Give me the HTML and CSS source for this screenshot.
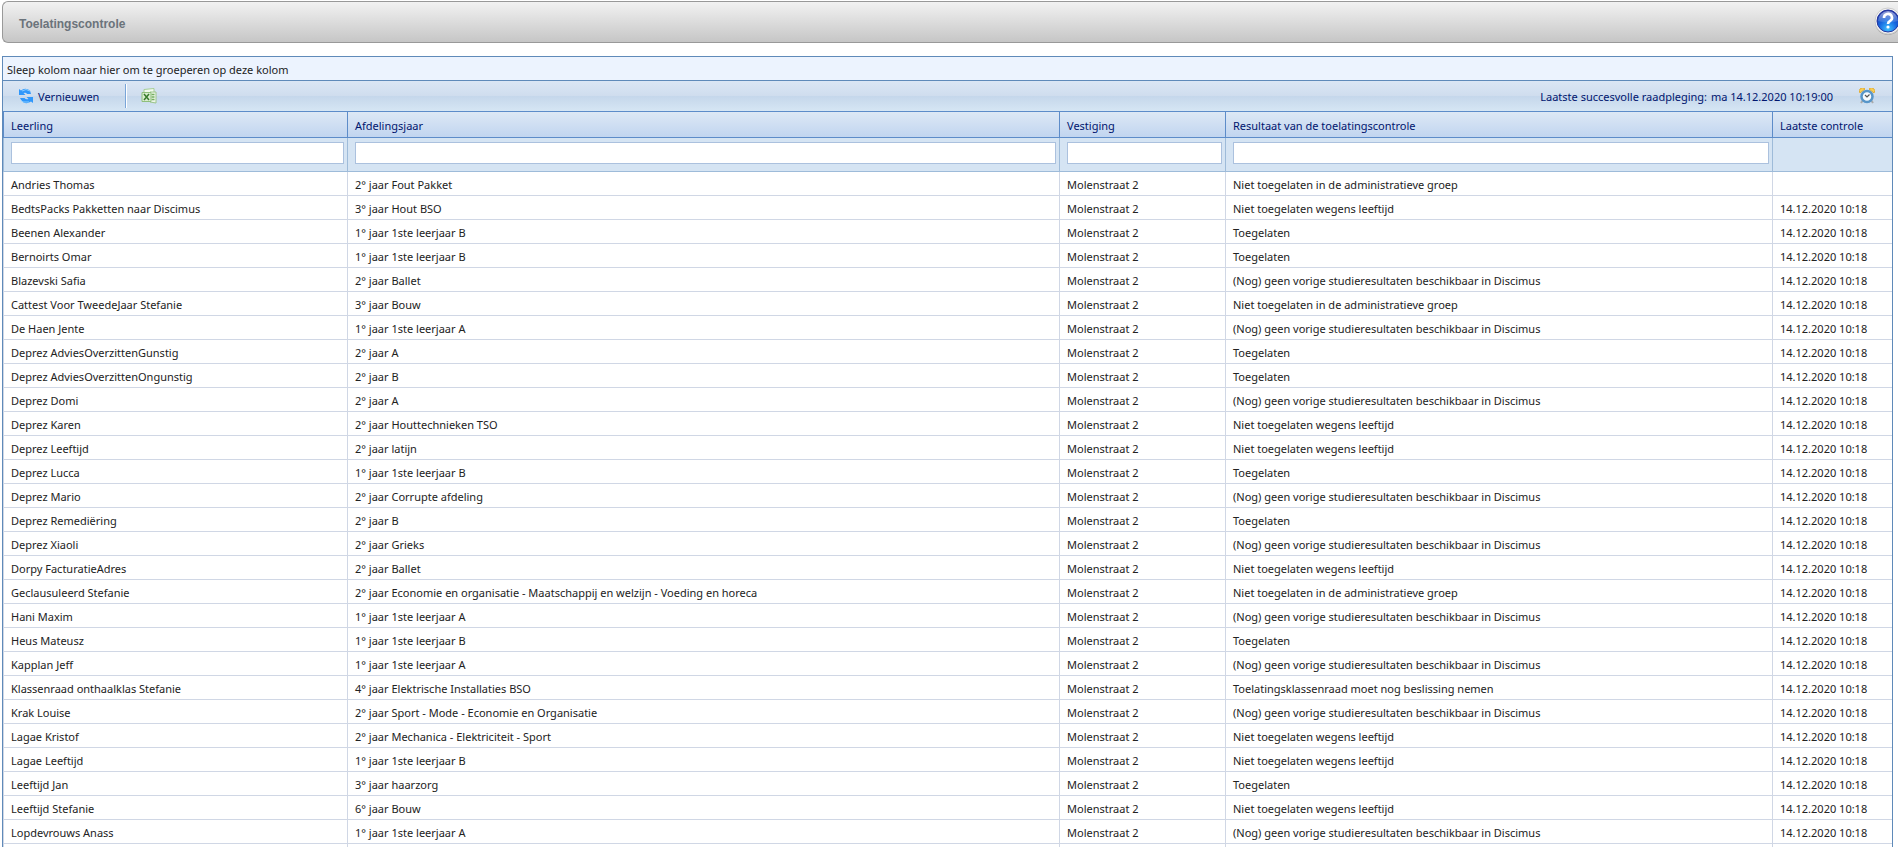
FILE: index.html
```html
<!DOCTYPE html>
<html lang="nl">
<head>
<meta charset="UTF-8" />
<title>Toelatingscontrole</title>
<link rel="stylesheet" href="styles.css">
</head>
<body>

<header class="page-header">
    <h1>Toelatingscontrole</h1>
    <button type="button" class="help-btn" aria-label="Help">
        <svg width="30" height="30" viewBox="0 0 30 30">
            <defs>
                <radialGradient id="helpFill" cx="50%" cy="85%" r="80%">
                    <stop offset="0" stop-color="#3fc0ff"/>
                    <stop offset="0.5" stop-color="#1668e0"/>
                    <stop offset="1" stop-color="#1b2fa8"/>
                </radialGradient>
                <linearGradient id="helpShine" x1="0" y1="0" x2="0" y2="1">
                    <stop offset="0" stop-color="#fff" stop-opacity="0.55"/>
                    <stop offset="1" stop-color="#fff" stop-opacity="0.1"/>
                </linearGradient>
            </defs>
            <circle cx="14" cy="15" r="13" fill="#a8a8a8"/>
            <circle cx="14" cy="14" r="13" fill="#f4f4f4" stroke="#ccc"/>
            <circle cx="14" cy="14" r="11" fill="url(#helpFill)" stroke="#24359c"/>
            <path d="M4 14a10 10 0 0 1 20 0q-10 3-20 0z" fill="url(#helpShine)"/>
            <path d="M10 11a4 3.800 0 1 1 6 3q-2 1-2 3" fill="none" stroke="#fff" stroke-width="2.600"/>
            <circle cx="14" cy="20" r="1.600" fill="#fff"/>
        </svg>
    </button>
</header>

<main class="grid">
    <div class="group-panel">Sleep kolom naar hier om te groeperen op deze kolom</div>

    <div class="toolbar">
        <button type="button" class="tool-btn">
            <svg width="16" height="16" viewBox="0 0 16 16">
                <path d="M1 7V1l2 1.500q4-3.500 9 0l1 3.500H9Q8 4 5.500 5l2 2z" fill="#2f97fb"/>
                <path d="M15 9v6l-2-1.500q-5 3.500-9 0L2 10h4.500Q8 12 10.500 11l-2-2z" fill="#2f97fb"/>
                <path d="M4 3q4-3 8 0M3 12l2 2h6" fill="none" stroke="#8accff"/>
            </svg>
            Vernieuwen
        </button>
        <span class="separator"></span>
        <button type="button" class="tool-btn" aria-label="Exporteren naar Excel">
            <svg width="16" height="16" viewBox="0 0 16 16">
                <path d="M3 1.500 13 .500v12L3 12z" fill="#f3faef" stroke="#a6ce96"/>
                <path d="M9 4h6v11l-6-1z" fill="#eef7ea" stroke="#9bc48a"/>
                <path d="M10.500 6.500h3M10.500 9h3M10.500 11.500h3" stroke="#74ad60" stroke-width="1.500"/>
                <path d="M1 4.500h9v9H1z" fill="#d9edcf" stroke="#8fbf7c"/>
                <path d="m3 6 5 6M8 6l-5 6" stroke="#377a2c" stroke-width="1.500"/>
            </svg>
        </button>
        <span class="status">Laatste succesvolle raadpleging: <time>ma 14.12.2020 10:19:00</time></span>
        <button type="button" class="tool-btn clock-btn" aria-label="Planning">
            <svg width="16" height="16" viewBox="0 0 16 16">
                <path d="m4 12-2 3M12 12l2 3" stroke="#aaa" stroke-width="2"/>
                <path d="M1 5a3 3 0 0 1 5-4zM15 5a3 3 0 0 0-5-4z" fill="#f8cf58" stroke="#dfab35"/>
                <circle cx="8" cy="8.500" r="5.500" fill="#f8fbfd" stroke="#5796c9" stroke-width="2.500"/>
                <path d="m6 7 2 2 2.500-2.500" fill="none" stroke="#555" stroke-width="1.200"/>
            </svg>
        </button>
    </div>

    <table>
        <colgroup>
            <col class="col-leerling">
            <col>
            <col class="col-vestiging">
            <col class="col-resultaat">
            <col class="col-controle">
        </colgroup>
        <thead>
            <tr>
                <th scope="col">Leerling</th>
                <th scope="col">Afdelingsjaar</th>
                <th scope="col">Vestiging</th>
                <th scope="col">Resultaat van de toelatingscontrole</th>
                <th scope="col">Laatste controle</th>
            </tr>
            <tr class="filter-row">
                <td><input type="text" aria-label="Leerling"></td>
                <td><input type="text" aria-label="Afdelingsjaar"></td>
                <td><input type="text" aria-label="Vestiging"></td>
                <td><input type="text" aria-label="Resultaat van de toelatingscontrole"></td>
                <td></td>
            </tr>
        </thead>
        <tbody id="rows"></tbody>
    </table>
</main>

<script>
    const ADMIN = 'Niet toegelaten in de administratieve groep';
    const LEEFTIJD = 'Niet toegelaten wegens leeftijd';
    const OK = 'Toegelaten';
    const GEEN = '(Nog) geen vorige studieresultaten beschikbaar in Discimus';
    const RAAD = 'Toelatingsklassenraad moet nog beslissing nemen';

    const leerlingen = [
        ['Andries Thomas', '2° jaar Fout Pakket', ADMIN],
        ['BedtsPacks Pakketten naar Discimus', '3° jaar Hout BSO', LEEFTIJD],
        ['Beenen Alexander', '1° jaar 1ste leerjaar B', OK],
        ['Bernoirts Omar', '1° jaar 1ste leerjaar B', OK],
        ['Blazevski Safia', '2° jaar Ballet', GEEN],
        ['Cattest Voor TweedeJaar Stefanie', '3° jaar Bouw', ADMIN],
        ['De Haen Jente', '1° jaar 1ste leerjaar A', GEEN],
        ['Deprez AdviesOverzittenGunstig', '2° jaar A', OK],
        ['Deprez AdviesOverzittenOngunstig', '2° jaar B', OK],
        ['Deprez Domi', '2° jaar A', GEEN],
        ['Deprez Karen', '2° jaar Houttechnieken TSO', LEEFTIJD],
        ['Deprez Leeftijd', '2° jaar latijn', LEEFTIJD],
        ['Deprez Lucca', '1° jaar 1ste leerjaar B', OK],
        ['Deprez Mario', '2° jaar Corrupte afdeling', GEEN],
        ['Deprez Remediëring', '2° jaar B', OK],
        ['Deprez Xiaoli', '2° jaar Grieks', GEEN],
        ['Dorpy FacturatieAdres', '2° jaar Ballet', LEEFTIJD],
        ['Geclausuleerd Stefanie', '2° jaar Economie en organisatie - Maatschappij en welzijn - Voeding en horeca', ADMIN],
        ['Hani Maxim', '1° jaar 1ste leerjaar A', GEEN],
        ['Heus Mateusz', '1° jaar 1ste leerjaar B', OK],
        ['Kapplan Jeff', '1° jaar 1ste leerjaar A', GEEN],
        ['Klassenraad onthaalklas Stefanie', '4° jaar Elektrische Installaties BSO', RAAD],
        ['Krak Louise', '2° jaar Sport - Mode - Economie en Organisatie', GEEN],
        ['Lagae Kristof', '2° jaar Mechanica - Elektriciteit - Sport', LEEFTIJD],
        ['Lagae Leeftijd', '1° jaar 1ste leerjaar B', LEEFTIJD],
        ['Leeftijd Jan', '3° jaar haarzorg', OK],
        ['Leeftijd Stefanie', '6° jaar Bouw', LEEFTIJD],
        ['Lopdevrouws Anass', '1° jaar 1ste leerjaar A', GEEN]
    ];

    const rows = document.getElementById('rows');

    function addRow(cells) {
        const tr = rows.insertRow();
        cells.forEach(text => tr.insertCell().textContent = text);
    }

    leerlingen.forEach(([naam, jaar, resultaat], i) => {
        // de eerste leerling is nog niet gecontroleerd
        addRow([naam, jaar, 'Molenstraat 2', resultaat, i === 0 ? '' : '14.12.2020 10:18']);
    });
    addRow(['', '', '', '', '']);
</script>

</body>
</html>
```
FILE: styles.css
```css
* {
    box-sizing: border-box;
}

body {
    margin: 0;
    padding: 1px 0 0 2px;
    height: 100vh;
    overflow: hidden;
    font-family: 'Segoe UI', 'Noto Sans', sans-serif;
    font-size: 11px;
    color: #222;
    background-color: #fff;
}

button {
    border: none;
    padding: 0;
    background: none;
    font: inherit;
    color: inherit;
    cursor: pointer;
}

svg {
    display: block;
    flex: none;
}

.page-header {
    display: flex;
    align-items: center;
    justify-content: space-between;
    height: 42px;
    padding-left: 16px;
    border: 1px solid #999;
    border-right: none;
    border-radius: 6px 0 0 6px;
    background: linear-gradient(#f2f2f2, #c6c6c6);
}

.page-header h1 {
    margin: 4px 0 0 0;
    font-family: Arial, 'Liberation Sans', sans-serif;
    font-size: 12px;
    font-weight: bold;
    color: #6b737b;
}

.help-btn {
    margin-right: -6px;
}

.grid {
    margin: 13px 5px 0 0;
    border: 1px solid #5f8ab9;
}

.group-panel {
    height: 24px;
    padding-left: 4px;
    line-height: 26px;
    background-color: #ecf3fe;
    border-bottom: 1px solid #5f8ab9;
}

.toolbar {
    display: flex;
    align-items: center;
    height: 30px;
    padding: 0 17px 0 15px;
    color: #00156e;
    background: linear-gradient(#dbe6f4 0%, #cfddee 50%, #c5d7eb 51%, #d6e6f4 100%);
}

.tool-btn {
    display: flex;
    align-items: center;
    gap: 4px;
}

.separator {
    width: 2px;
    height: 24px;
    margin: 0 14px 0 26px;
    border-left: 1px solid #79a5d8;
    border-right: 1px solid #fff;
}

.status {
    margin-left: auto;
}

.status time {
    margin-left: 1px;
}

.clock-btn {
    margin-left: 26px;
}

table {
    width: 100%;
    table-layout: fixed;
    border-collapse: separate;
    border-spacing: 0;
}

.col-leerling {
    width: 344px;
}

.col-vestiging {
    width: 166px;
}

.col-resultaat {
    width: 547px;
}

.col-controle {
    width: 120px;
}

th {
    height: 27px;
    padding: 2px 7px 0 7px;
    font-weight: normal;
    text-align: left;
    color: #00156e;
    background: linear-gradient(#dde8f5, #c1d5f0);
    border: 1px solid #5d8cc9;
    border-right: none;
}

td {
    height: 24px;
    padding: 2px 7px 0 7px;
    line-height: 20px;
    white-space: nowrap;
    border-left: 1px solid #d0d7e5;
    border-bottom: 1px solid #d0d7e5;
}

.filter-row td {
    height: 34px;
    padding: 4px 3px 7px 7px;
    vertical-align: top;
    background-color: #d5e4f3;
    border-color: #9ebbd9;
}

.filter-row input {
    display: block;
    width: 100%;
    height: 22px;
    padding: 0 4px;
    border: 1px solid #abc1de;
    background-color: #fff;
    font: inherit;
}
```
